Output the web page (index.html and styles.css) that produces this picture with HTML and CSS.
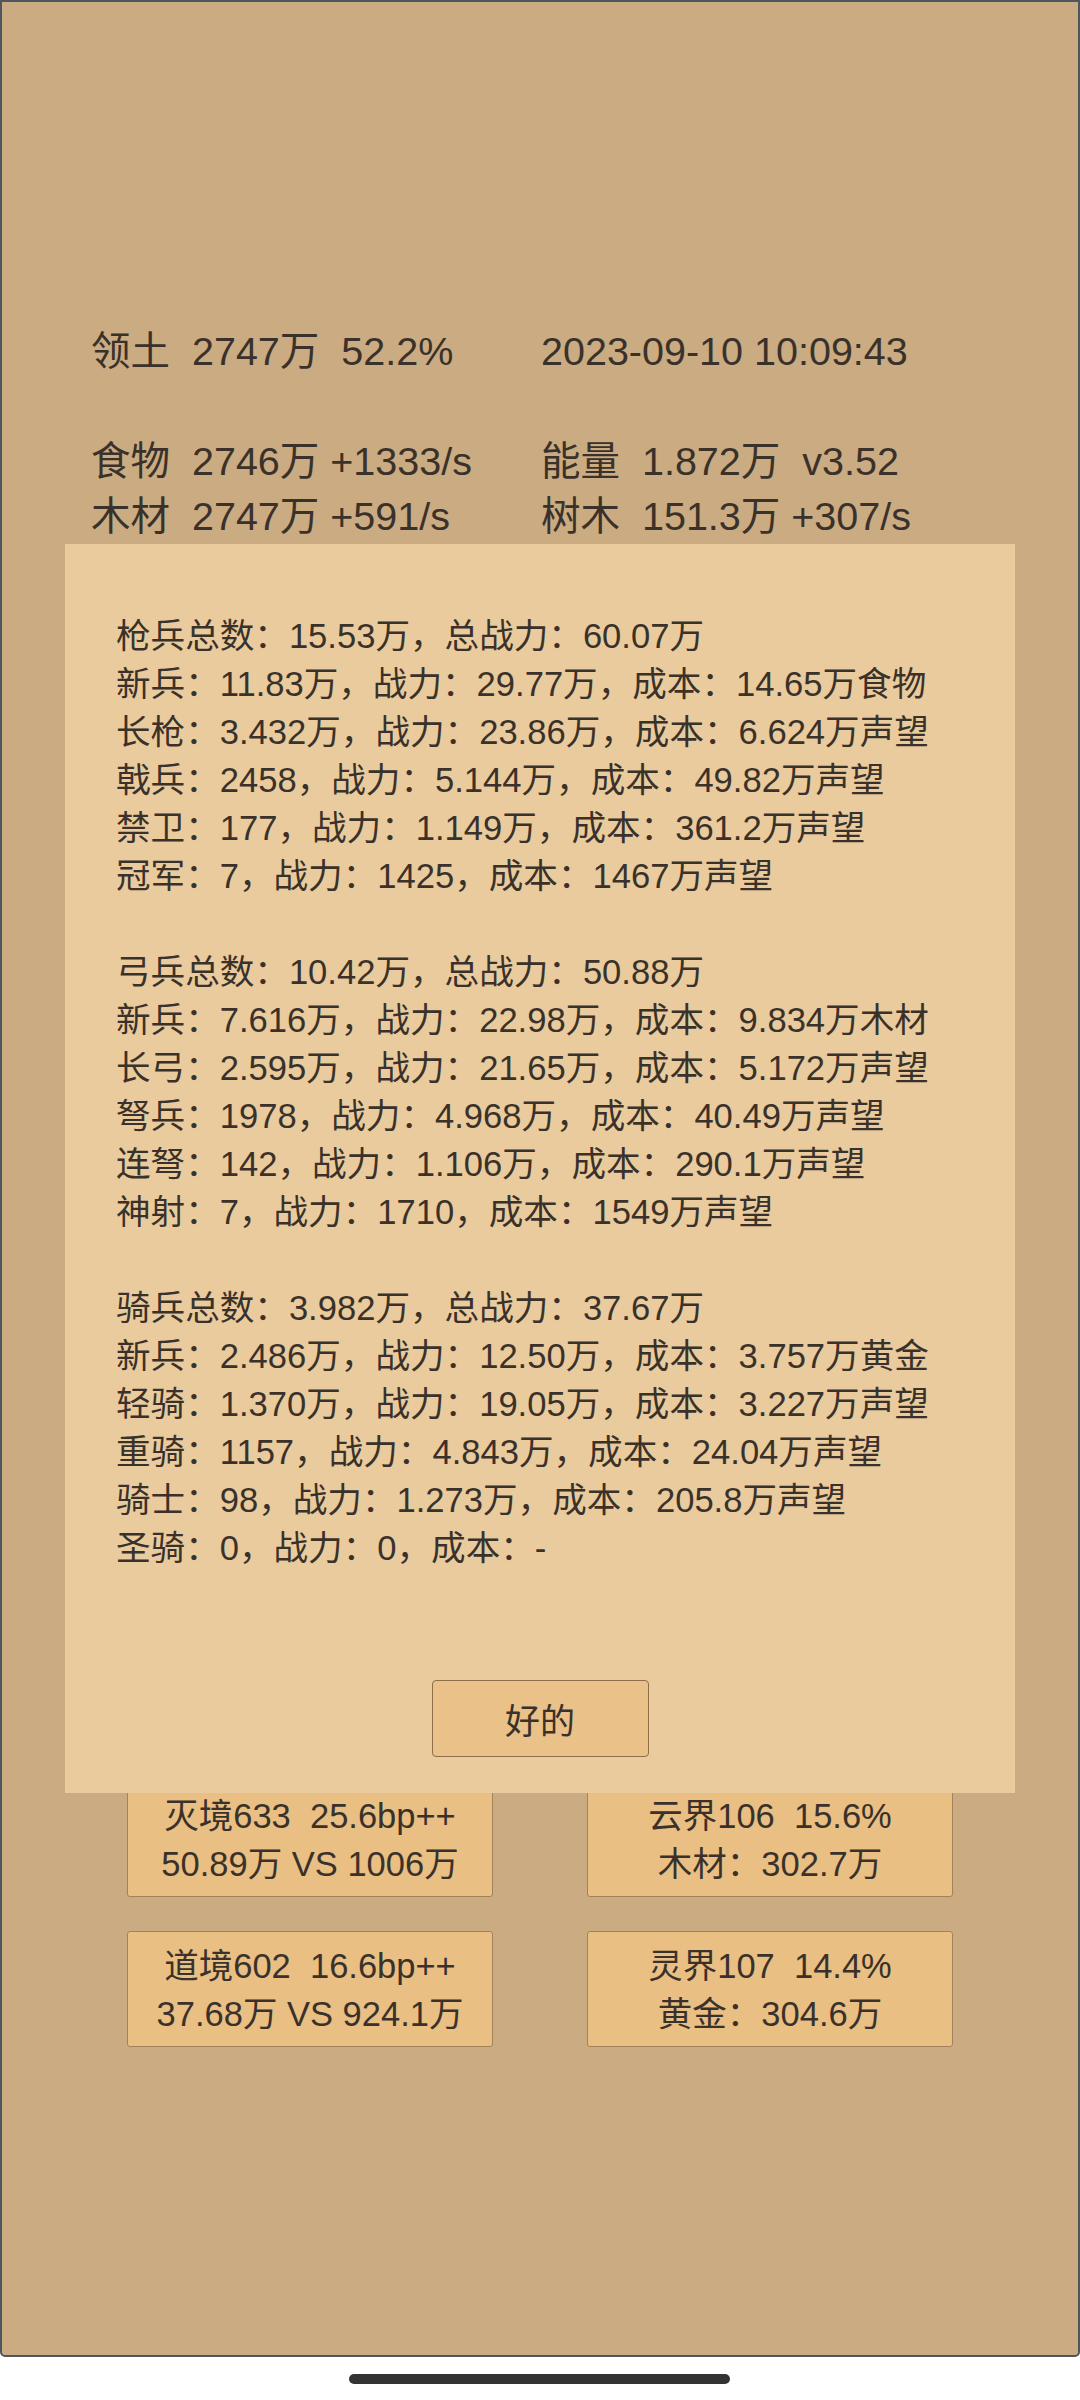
FILE: index.html
```html
<!DOCTYPE html>
<html lang="zh">

<head>
    <meta charset="UTF-8">
    <meta name="viewport" content="width=device-width, initial-scale=1.0">
    <title>领土</title>

    <link rel="stylesheet" href="styles.css">
</head>

<body>
    <div class="screen">
        <div class="stats">
            <div class="stats__row"><span>领土  2747万  52.2%</span><span>2023-09-10 10:09:43</span></div>
            <div class="stats__row"></div>
            <div class="stats__row"><span>食物  2746万 +1333/s</span><span>能量  1.872万  v3.52</span></div>
            <div class="stats__row"><span>木材  2747万 +591/s</span><span>树木  151.3万 +307/s</span></div>
        </div>

        <div class="realms">
            <div class="realm">灭境633  25.6bp++<br>50.89万 VS 1006万</div>
            <div class="realm">云界106  15.6%<br>木材：302.7万</div>
            <div class="realm">道境602  16.6bp++<br>37.68万 VS 924.1万</div>
            <div class="realm">灵界107  14.4%<br>黄金：304.6万</div>
        </div>

        <div class="dialog">
            <div class="dialog__text">
                <p>枪兵总数：15.53万，总战力：60.07万</p>
                <p>新兵：11.83万，战力：29.77万，成本：14.65万食物</p>
                <p>长枪：3.432万，战力：23.86万，成本：6.624万声望</p>
                <p>戟兵：2458，战力：5.144万，成本：49.82万声望</p>
                <p>禁卫：177，战力：1.149万，成本：361.2万声望</p>
                <p>冠军：7，战力：1425，成本：1467万声望</p>
                <p>&nbsp;</p>
                <p>弓兵总数：10.42万，总战力：50.88万</p>
                <p>新兵：7.616万，战力：22.98万，成本：9.834万木材</p>
                <p>长弓：2.595万，战力：21.65万，成本：5.172万声望</p>
                <p>弩兵：1978，战力：4.968万，成本：40.49万声望</p>
                <p>连弩：142，战力：1.106万，成本：290.1万声望</p>
                <p>神射：7，战力：1710，成本：1549万声望</p>
                <p>&nbsp;</p>
                <p>骑兵总数：3.982万，总战力：37.67万</p>
                <p>新兵：2.486万，战力：12.50万，成本：3.757万黄金</p>
                <p>轻骑：1.370万，战力：19.05万，成本：3.227万声望</p>
                <p>重骑：1157，战力：4.843万，成本：24.04万声望</p>
                <p>骑士：98，战力：1.273万，成本：205.8万声望</p>
                <p>圣骑：0，战力：0，成本：-</p>
            </div>
            <button class="dialog__ok">好的</button>
        </div>
    </div>
    <div class="home-bar"></div>
</body>

</html>
```

FILE: styles.css
```css
body {
    margin: 0;
    background: #ffffff;
    font-family: "Liberation Sans", "Noto Sans CJK SC", sans-serif;
    color: #3a322a;
}

.screen {
    position: relative;
    box-sizing: border-box;
    width: 1080px;
    height: 2357px;
    background: #caab82;
    border: 2px solid #4f565f;
    border-radius: 0 0 5px 5px;
    padding-top: 322px;
}

/* top resource lines */
.stats {
    padding-left: 89px;
    font-size: 39.5px;
}

.stats__row {
    display: grid;
    grid-template-columns: 450px 1fr;
    height: 55px;
    line-height: 55px;
    white-space: pre;
}

/* realm cards under the dialog */
.realms {
    display: grid;
    grid-template-columns: 366px 366px;
    column-gap: 94px;
    row-gap: 34px;
    justify-content: center;
    margin-top: 1237px;
    font-size: 34.5px;
    line-height: 48px;
}

.realm {
    box-sizing: border-box;
    height: 116px;
    padding: 10px 0;
    background: #e9bf84;
    border: 1px solid #a3825a;
    border-radius: 3px;
    text-align: center;
    white-space: pre;
}

.dialog {
    position: absolute;
    top: 542px;
    left: 63px;
    box-sizing: border-box;
    width: 950px;
    height: 1249px;
    background: #eacb9e;
    padding: 68px 0 36px 51px;
    display: flex;
    flex-direction: column;
}

.dialog__text {
    font-size: 34.6px;
    line-height: 48px;
}

.dialog__text p {
    margin: 0;
    white-space: nowrap;
}

.dialog__ok {
    margin-top: auto;
    align-self: center;
    margin-left: -51px;
    width: 217px;
    height: 77px;
    background: #e9c189;
    border: 1px solid #8e6e48;
    border-radius: 4px;
    font-family: inherit;
    font-size: 35px;
    color: #3a322a;
    padding: 0;
}

.home-bar {
    width: 381px;
    height: 10px;
    margin: 17px 0 0 349px;
    background: #333333;
    border-radius: 5px;
}
```
